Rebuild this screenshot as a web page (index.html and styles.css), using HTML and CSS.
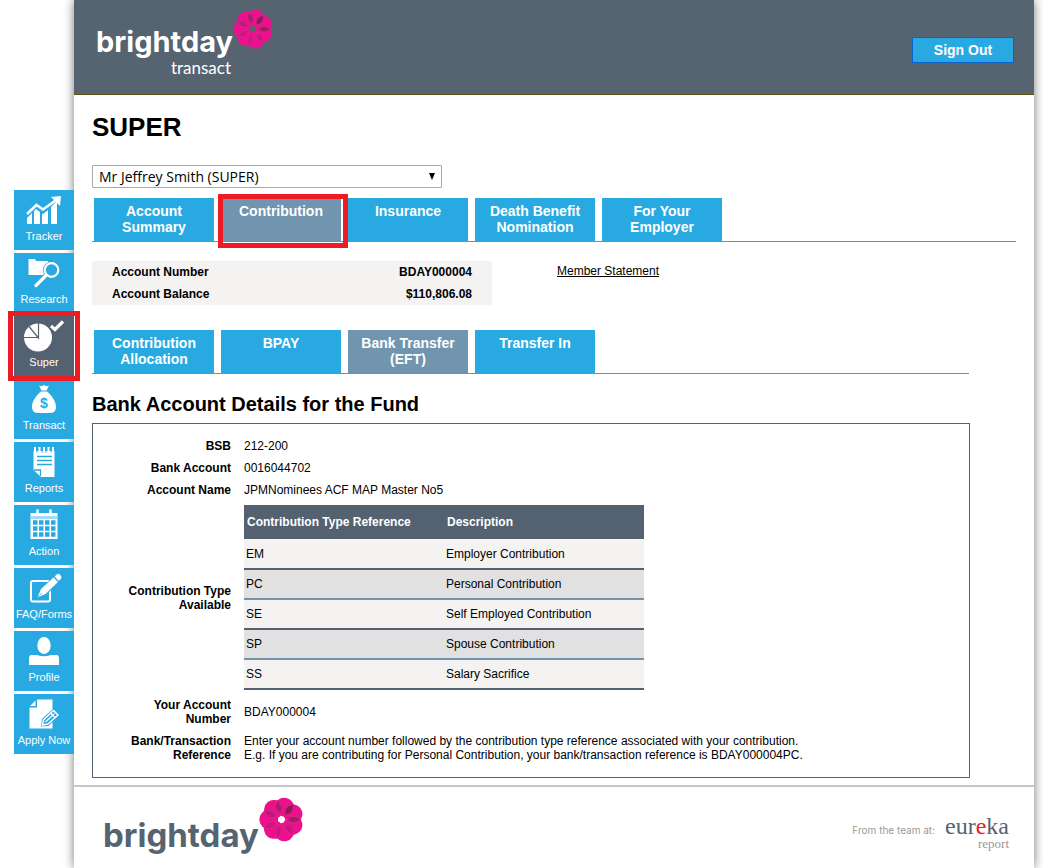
FILE: index.html
```html
<!DOCTYPE html>
<html lang="en">
<head>
<meta charset="utf-8">
<title>brightday transact - Super</title>
<link rel="stylesheet" href="styles.css">
</head>
<body class="page">
<svg class="defs" aria-hidden="true">
  <symbol id="flower" viewBox="-20 -20 40 40">
    <circle r="11" fill="none" stroke="#ec108c" stroke-width="13"/>
    <g fill="#ec108c">
      <circle cx="11.300" r="8.400" transform="rotate(-26)"/><circle cx="11.300" r="8.400" transform="rotate(-77)"/><circle cx="11.300" r="8.400" transform="rotate(-128)"/><circle cx="11.300" r="8.400" transform="rotate(-180)"/><circle cx="11.300" r="8.400" transform="rotate(-231)"/><circle cx="11.300" r="8.400" transform="rotate(-283)"/><circle cx="11.300" r="8.400" transform="rotate(-334)"/>
    </g>
    <g stroke="#e0409c" stroke-width=".3">
      <path d="M5 0Q11-6 17 0Q11 6 5 0Z" fill="#a81c66"/>
      <path d="M5 0Q11-6 17 0Q11 6 5 0Z" fill="#931a58" transform="rotate(-52)"/>
      <path d="M5 0Q11-6 17 0Q11 6 5 0Z" fill="#b01c6c" transform="rotate(-103)"/>
      <path d="M5 0Q11-6 17 0Q11 6 5 0Z" fill="#c0187a" transform="rotate(-154)"/>
      <path d="M5 0Q11-6 17 0Q11 6 5 0Z" fill="#d01482" transform="rotate(-206)"/>
      <path d="M5 0Q11-6 17 0Q11 6 5 0Z" fill="#d01482" transform="rotate(-257)"/>
      <path d="M5 0Q11-6 17 0Q11 6 5 0Z" fill="#cc1480" transform="rotate(-309)"/>
    </g>
  </symbol>
</svg>

<nav class="side" aria-label="Main">
  <a class="tile" href="#"><svg class="icon" viewBox="0 0 60 40"><path fill="#fff" d="M13 28l5-5v11h-5zM20 21l2-2 4 3v12h-6zM28 24l1 0 5-4v14h-6zM37 17l6-6v23h-6z"/><path d="M13 24L22.500 15L29 19.500L43 9.500" fill="none" stroke="#fff" stroke-width="2.600"/><path fill="#fff" d="M37 7l10-1-1 10z"/></svg><span class="name">Tracker</span></a>
  <a class="tile" href="#"><svg class="icon" viewBox="0 0 60 40"><path fill="#fff" d="M14.500 6h6l2 2H34v14H14.500z"/><path d="M32 23L22 33" stroke="#29a9e1" stroke-width="6"/><circle cx="37.500" cy="17" r="8.600" fill="#29a9e1"/><circle cx="37.500" cy="17" r="6.800" fill="none" stroke="#fff" stroke-width="2.200"/><path d="M32 22.500L22 32.500" stroke="#fff" stroke-width="3.200" stroke-linecap="round"/></svg><span class="name">Research</span></a>
  <a class="tile tile-active" href="#"><svg class="icon" viewBox="0 0 60 40"><circle cx="24" cy="21.500" r="14" fill="#fff"/><path d="M24.500 7V22L15 10.500M24.500 21.500H10" fill="none" stroke="#546170" stroke-width="1.200"/><path d="M37 10L41 13.500L49 5.500" fill="none" stroke="#fff" stroke-width="3.200"/></svg><span class="name">Super</span><span class="mark mark-tile"></span></a>
  <a class="tile" href="#"><svg class="icon" viewBox="0 0 60 40"><path fill="#fff" d="M25 6.500q2.500 1.500 5-.5 2.500 2 5 .500l-2.500 5h-5zM27 12.500h6c4 3 9.500 10 9 16q-.5 5.500-6 5.500H24q-5.500 0-6-5.500c-.5-6 5-13 9-16z"/><text x="30" y="29" class="dollar">$</text></svg><span class="name">Transact</span></a>
  <a class="tile" href="#"><svg class="icon" viewBox="0 0 60 40"><path fill="#fff" d="M19.500 9h21v26H27l-7.500-7z"/><path d="M21 5v6M25.500 5v6M30 5v6M34.500 5v6M39 5v6" stroke="#fff" stroke-width="2"/><path d="M23 8v3M28 8v3M32 8v3M37 8v3" stroke="#29a9e1" stroke-width=".7"/><path d="M23 14.500h15M23 18.500h15M23 22.500h15M20 28h6.500v6" fill="none" stroke="#29a9e1" stroke-width="1.300"/></svg><span class="name">Reports</span></a>
  <a class="tile" href="#"><svg class="icon" viewBox="0 0 60 40"><path fill="#fff" d="M16.500 8h27v26h-27z"/><path fill="#a5dbf4" d="M16.500 11h27v3h-27z"/><path d="M23.500 4.500v6M36.500 4.500v6" stroke="#fff" stroke-width="2.500"/><path d="M19 17.500h22.500M19 23.500h22.500M19 29.500h22.500" stroke="#29a9e1" stroke-width="4.400" stroke-dasharray="4.500 1.500"/></svg><span class="name">Action</span></a>
  <a class="tile" href="#"><svg class="icon" viewBox="0 0 60 40"><rect x="17" y="13" width="19" height="20.500" rx="2" fill="none" stroke="#fff" stroke-width="2"/><path d="M22 31l4.500-10L41 7l6 6-14.500 13.500z" fill="#29a9e1"/><path fill="#fff" d="M23.500 29.500l3.500-8.500L39.500 9.500l4.500 4.500L31.500 26zM40.500 8.500l2.500-2.300q1.500-1 3.300.700 2 2 .8 3.700l-2.300 2.400z"/><path d="M24 29l4-4" stroke="#29a9e1" stroke-width=".7"/></svg><span class="name">FAQ/Forms</span></a>
  <a class="tile" href="#"><svg class="icon" viewBox="0 0 60 40"><ellipse cx="30" cy="14.500" rx="6.700" ry="8.500" fill="#fff"/><path fill="#fff" d="M15 26.500q0-2 2-2.500h6q7 2.500 14 0h6q2 .5 2 2.500V34H15z"/></svg><span class="name">Profile</span></a>
  <a class="tile" href="#"><svg class="icon" viewBox="0 0 60 40"><path fill="#fff" d="M23 5.500h15.500v29h-23V13.500H23zM21.500 6.500V12h-5.500z"/><path d="M27 32.500l1-7.500L39.500 14.500l6.500 6.500L34.500 32z" fill="#29a9e1"/><path d="M28.500 31l1-5L39.500 16.500l4.500 4.500L34 30z" fill="none" stroke="#fff" stroke-width="1.500"/><path d="M31.500 28l9-8.500M36.500 19l4.500 4.500" stroke="#fff" stroke-width="1.200"/></svg><span class="name">Apply Now</span></a>
</nav>

<div class="sheet">
  <header class="top">
    <svg class="logo" viewBox="0 0 180 72" role="img" aria-label="brightday transact">
      <text x="0" y="47" class="word">brightday</text>
      <text x="135" y="69" class="sub">transact</text>
      <use href="#flower" x="137" y="4" width="40" height="40"/>
    </svg>
    <button class="signout" type="button">Sign Out</button>
  </header>

  <main class="content">
    <h1 class="title">SUPER</h1>
    <div class="picker">
      <select class="select" aria-label="Account"><option>Mr Jeffrey Smith (SUPER)</option></select>
      <svg class="arrow" viewBox="0 0 6 7" aria-hidden="true"><path d="M0 0h6L3 7z"/></svg>
    </div>
    <nav class="tabs" aria-label="Account sections">
      <a class="tab" href="#">Account Summary</a>
      <a class="tab tab-active" href="#">Contribution<span class="mark mark-tab"></span></a>
      <a class="tab" href="#">Insurance</a>
      <a class="tab" href="#">Death Benefit Nomination</a>
      <a class="tab" href="#">For Your Employer</a>
    </nav>
    <div class="summary">
      <dl class="account">
        <div class="pair"><dt>Account Number</dt><dd>BDAY000004</dd></div>
        <div class="pair"><dt>Account Balance</dt><dd>$110,806.08</dd></div>
      </dl>
      <a class="statement" href="#">Member Statement</a>
    </div>
    <section class="panel">
      <nav class="tabs" aria-label="Contribution sections">
        <a class="tab" href="#">Contribution Allocation</a>
        <a class="tab" href="#">BPAY</a>
        <a class="tab tab-active" href="#">Bank Transfer (EFT)</a>
        <a class="tab" href="#">Transfer In</a>
      </nav>
      <h2 class="subtitle">Bank Account Details for the Fund</h2>
      <div class="box">
        <table class="details">
          <tr><th scope="row">BSB</th><td>212-200</td></tr>
          <tr><th scope="row">Bank Account</th><td>0016044702</td></tr>
          <tr><th scope="row">Account Name</th><td>JPMNominees ACF MAP Master No5</td></tr>
          <tr><th scope="row">Contribution Type Available</th><td>
            <table class="types">
              <thead><tr><th scope="col">Contribution Type Reference</th><th scope="col">Description</th></tr></thead>
              <tbody>
                <tr><td>EM</td><td>Employer Contribution</td></tr>
                <tr><td>PC</td><td>Personal Contribution</td></tr>
                <tr><td>SE</td><td>Self Employed Contribution</td></tr>
                <tr><td>SP</td><td>Spouse Contribution</td></tr>
                <tr><td>SS</td><td>Salary Sacrifice</td></tr>
              </tbody>
            </table>
          </td></tr>
          <tr><th scope="row">Your Account Number</th><td>BDAY000004</td></tr>
          <tr><th scope="row">Bank/Transaction Reference</th><td>Enter your account number followed by the contribution type reference associated with your contribution.<br>E.g. If you are contributing for Personal Contribution, your bank/transaction reference is BDAY000004PC.</td></tr>
        </table>
      </div>
    </section>
  </main>

  <footer class="foot">
    <svg class="logo-foot" viewBox="0 0 206 64" role="img" aria-label="brightday">
      <text x="0" y="53" class="word-foot">brightday</text>
      <use href="#flower" x="156" y="3" width="45" height="45"/>
    </svg>
    <div class="team">
      <span class="from">From the team at:</span>
      <span class="eureka"><span class="eureka-name">eur<span class="red">e</span>ka</span><span class="eureka-sub">report</span></span>
    </div>
  </footer>
</div>
</body>
</html>
```

FILE: styles.css
```css
* { box-sizing: border-box; }
.page {
  margin: 0;
  min-height: 100vh;
  display: flex;
  padding: 0 9px 0 14px;
  background: #fff;
  color: #000;
  font: 12px/14px "Liberation Sans", Arial, sans-serif;
}
.defs { position: absolute; width: 0; height: 0; }

.side {
  position: relative;
  z-index: 1;
  flex: none;
  width: 60px;
  padding-top: 190px;
  display: flex;
  flex-direction: column;
  gap: 3px;
}
.tile {
  position: relative;
  height: 60px;
  background: #29a9e1;
  color: #fff;
  font-size: 11px;
  line-height: 12px;
  text-align: center;
  text-decoration: none;
  white-space: nowrap;
}
.tile-active { background: #546170; z-index: 1; }
.icon { display: block; width: 60px; height: 40px; }
.name { display: block; }
.dollar { font: bold 14px "Liberation Sans", Arial, sans-serif; fill: #29a9e1; text-anchor: middle; }
.mark { position: absolute; border: 5px solid #ed1c24; pointer-events: none; }
.mark-tile { inset: -5px -6px; }
.mark-tab { inset: -4px -7px -7px -3px; z-index: 1; }

.sheet {
  flex: 1;
  min-width: 0;
  display: flex;
  flex-direction: column;
  background: #fff;
  box-shadow: 0 0 10px #777;
}
.top {
  display: flex;
  justify-content: space-between;
  align-items: flex-start;
  padding: 5px 20px 17px 22px;
  background: #566370;
  border-bottom: 1px solid #5c5410;
}
.logo { width: 180px; height: 72px; }
.word { font: bold 29px Inter, sans-serif; fill: #fff; }
.sub { font: 17px Lato, sans-serif; fill: #fff; text-anchor: end; }
.signout {
  margin-top: 32px;
  width: 102px;
  height: 26px;
  padding: 0;
  border: 1px solid #0c62d0;
  background: #29a9e1;
  color: #fff;
  font: bold 14px/16px "Liberation Sans", Arial, sans-serif;
}

.content { padding: 17px 18px 7px; }
.title { margin: 0 0 23px; font-size: 26px; line-height: 30px; }
.picker { position: relative; width: 350px; margin-bottom: 10px; }
.select {
  display: block;
  width: 100%;
  height: 23px;
  padding: 0 6px;
  border: 1px solid #a9a9a9;
  border-radius: 1px;
  appearance: none;
  background: #fff;
  color: #000;
  font: 14px/20px "Open Sans", sans-serif;
}
.arrow { position: absolute; right: 7px; top: 8px; width: 6px; height: 7px; pointer-events: none; }

.tabs {
  display: flex;
  gap: 7px;
  padding-left: 2px;
  border-bottom: 1px solid #888;
}
.tab {
  position: relative;
  width: 120px;
  height: 43px;
  padding: 5px 10px 0;
  background: #29a9e1;
  color: #fff;
  font-size: 14px;
  font-weight: bold;
  line-height: 16px;
  text-align: center;
  text-decoration: none;
}
.tab-active { background: #7195ae; }

.summary { display: flex; gap: 65px; margin: 19px 0 25px; }
.account { width: 400px; margin: 0; padding: 0 20px; background: #f4f3f2; font-weight: bold; }
.pair { display: flex; justify-content: space-between; line-height: 22px; }
.pair dd { margin: 0; }
.statement { color: #000; margin-top: 3px; }

.panel { margin-right: 46px; }
.panel .tabs { margin-right: 1px; }
.subtitle { margin: 18px 0 7px; font-size: 20px; line-height: 24px; }
.box { border: 1px solid #546170; padding: 11px 0; }
.details { width: 100%; border-collapse: collapse; }
.details th, .details td { padding: 4px 0; }
.details > tbody > tr > th { width: 138px; padding-left: 28px; text-align: right; }
.details > tbody > tr > td { padding-left: 13px; }
.details .types { width: 400px; border-collapse: separate; border-spacing: 0; table-layout: fixed; }
.types th { height: 34px; padding: 0 3px; background: #546170; color: #fff; text-align: left; }
.types tbody td { height: 30px; padding: 0 2px; background: #f4f3f2; border-bottom: 2px solid #546170; }
.types tbody tr:first-child td { height: 31px; }
.types tbody tr:nth-child(even) td { background: #e1e1e1; border-bottom-color: #7195ae; }

.foot {
  flex: 1;
  display: flex;
  justify-content: space-between;
  align-items: flex-start;
  padding: 7px 25px 0 29px;
  border-top: 2px solid #c6c6c6;
}
.logo-foot { width: 206px; height: 64px; }
.word-foot { font: bold 33px Inter, sans-serif; fill: #566370; }
.team { display: flex; gap: 10px; margin-top: 21px; }
.from { margin-top: 8px; color: #999; font: 10px/14px Inter, sans-serif; }
.eureka { display: flex; flex-direction: column; align-items: flex-end; font-family: "Liberation Serif", serif; }
.eureka-name { color: #566370; font-size: 24px; line-height: 22px; }
.eureka-sub { color: #999; font-size: 13px; line-height: 14px; }
.red { color: #ed1c24; }
```
